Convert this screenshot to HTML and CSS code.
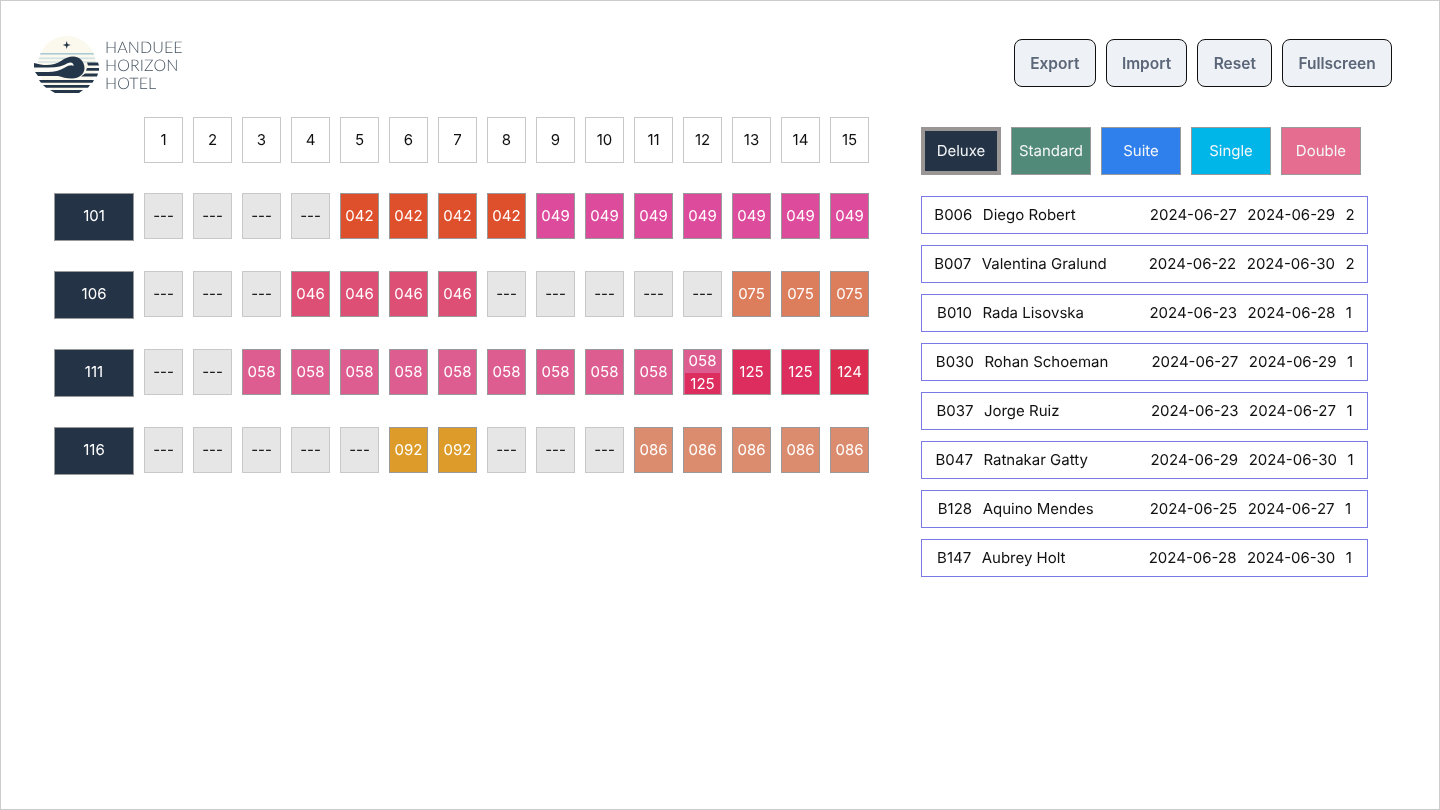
FILE: index.html
```html
<!DOCTYPE html>
<html lang="en">
<head>
  <meta charset="UTF-8">
  <meta name="viewport" content="width=device-width, initial-scale=1.0">
  <title>Handuee Horizon Hotel</title>
  <link rel="stylesheet" href="styles.css">
</head>
<body>
  <div class="page">
    <header class="topbar">
      <div class="logo">
        <svg class="logo-mark" viewBox="0 0 66 58" width="66" height="58" aria-hidden="true">
          <defs>
            <clipPath id="disc"><circle cx="33" cy="29" r="29"/></clipPath>
          </defs>
          <g clip-path="url(#disc)">
            <rect width="66" height="58" fill="#fbf9ee"/>
            <rect y="17" width="66" height="1.6" fill="#a9cbd8"/>
            <rect y="21.5" width="66" height="1.6" fill="#cfe2e6"/>
            <rect y="25" width="66" height="2" fill="#dfe9e8"/>
          </g>
          <path d="M32.700 5l.9 3.100 3.100.9-3.100.9-.9 3.100-.9-3.100-3.100-.9 3.100-.9z" fill="#24364a"/>
          <path d="M0 27C10 30 20 30 27 25 31 22 35 20.500 39 20.500 46 20.500 50.500 26 50.500 32 50.500 38 45 42.500 38 42.500 32 42.500 28 41 24 40H4L1 36H0z" fill="#24364a"/>
          <path d="M0 31.500H15C23 31.500 29 30 34 27 37 25.500 40 27 39.500 30 38 28.500 35 29 31 31.500 26 34.500 20 36 14 36H0z" fill="#fdfcf6"/>
          <path d="M53 26.500h11l1 3H54zM53 32h12v2.800H52zM51 37.500h13l-1 3H47z" fill="#24364a"/>
          <path d="M5 44h55l-1.500 2.800H7zM9 49h47l-2 2.800H12zM16 54h33l-4 3H21z" fill="#24364a"/>
        </svg>
        <div class="logo-name">HANDUEE<br>HORIZON<br>HOTEL</div>
      </div>
      <nav class="actions">
        <button class="btn">Export</button>
        <button class="btn">Import</button>
        <button class="btn">Reset</button>
        <button class="btn">Fullscreen</button>
      </nav>
    </header>

    <main class="content">
      <section class="board">
        <div class="corner"></div>
        <div class="cell day">1</div><div class="cell day">2</div><div class="cell day">3</div><div class="cell day">4</div><div class="cell day">5</div>
        <div class="cell day">6</div><div class="cell day">7</div><div class="cell day">8</div><div class="cell day">9</div><div class="cell day">10</div>
        <div class="cell day">11</div><div class="cell day">12</div><div class="cell day">13</div><div class="cell day">14</div><div class="cell day">15</div>

        <div class="room">101</div>
        <div class="cell free">---</div><div class="cell free">---</div><div class="cell free">---</div><div class="cell free">---</div>
        <div class="cell b042">042</div><div class="cell b042">042</div><div class="cell b042">042</div><div class="cell b042">042</div>
        <div class="cell b049">049</div><div class="cell b049">049</div><div class="cell b049">049</div><div class="cell b049">049</div><div class="cell b049">049</div><div class="cell b049">049</div><div class="cell b049">049</div>

        <div class="room">106</div>
        <div class="cell free">---</div><div class="cell free">---</div><div class="cell free">---</div>
        <div class="cell b046">046</div><div class="cell b046">046</div><div class="cell b046">046</div><div class="cell b046">046</div>
        <div class="cell free">---</div><div class="cell free">---</div><div class="cell free">---</div><div class="cell free">---</div><div class="cell free">---</div>
        <div class="cell b075">075</div><div class="cell b075">075</div><div class="cell b075">075</div>

        <div class="room">111</div>
        <div class="cell free">---</div><div class="cell free">---</div>
        <div class="cell b058">058</div><div class="cell b058">058</div><div class="cell b058">058</div><div class="cell b058">058</div><div class="cell b058">058</div>
        <div class="cell b058">058</div><div class="cell b058">058</div><div class="cell b058">058</div><div class="cell b058">058</div>
        <div class="cell split b058"><span class="half">058</span><span class="half b125">125</span></div>
        <div class="cell b125">125</div><div class="cell b125">125</div><div class="cell b124">124</div>

        <div class="room">116</div>
        <div class="cell free">---</div><div class="cell free">---</div><div class="cell free">---</div><div class="cell free">---</div><div class="cell free">---</div>
        <div class="cell b092">092</div><div class="cell b092">092</div>
        <div class="cell free">---</div><div class="cell free">---</div><div class="cell free">---</div>
        <div class="cell b086">086</div><div class="cell b086">086</div><div class="cell b086">086</div><div class="cell b086">086</div><div class="cell b086">086</div>
      </section>

      <aside class="side">
        <div class="types">
          <div class="type deluxe active">Deluxe</div>
          <div class="type standard">Standard</div>
          <div class="type suite">Suite</div>
          <div class="type single">Single</div>
          <div class="type double">Double</div>
        </div>
        <ul class="bookings">
          <li><span>B006</span><span class="guest">Diego Robert</span><span>2024-06-27</span><span>2024-06-29</span><span>2</span></li>
          <li><span>B007</span><span class="guest">Valentina Gralund</span><span>2024-06-22</span><span>2024-06-30</span><span>2</span></li>
          <li><span>B010</span><span class="guest">Rada Lisovska</span><span>2024-06-23</span><span>2024-06-28</span><span>1</span></li>
          <li><span>B030</span><span class="guest">Rohan Schoeman</span><span>2024-06-27</span><span>2024-06-29</span><span>1</span></li>
          <li><span>B037</span><span class="guest">Jorge Ruiz</span><span>2024-06-23</span><span>2024-06-27</span><span>1</span></li>
          <li><span>B047</span><span class="guest">Ratnakar Gatty</span><span>2024-06-29</span><span>2024-06-30</span><span>1</span></li>
          <li><span>B128</span><span class="guest">Aquino Mendes</span><span>2024-06-25</span><span>2024-06-27</span><span>1</span></li>
          <li><span>B147</span><span class="guest">Aubrey Holt</span><span>2024-06-28</span><span>2024-06-30</span><span>1</span></li>
        </ul>
      </aside>
    </main>
  </div>
</body>
</html>
```

FILE: styles.css
```css
* {
  box-sizing: border-box;
}

body {
  margin: 0;
  font-family: Inter, "Liberation Sans", sans-serif;
  font-size: 15px;
  color: #111;
  background: white;
  text-rendering: geometricPrecision;
}

.page {
  height: 810px;
  border: 1px solid #ccc;
  padding: 35px 47px 0 33px;
  will-change: transform;
}

.topbar {
  display: flex;
  justify-content: space-between;
  align-items: flex-start;
  height: 81px;
}

.logo {
  display: flex;
  align-items: center;
  gap: 5px;
}

.logo-name {
  padding-top: 1px;
  font-family: Lato, sans-serif;
  font-weight: 300;
  font-size: 16px;
  line-height: 18px;
  letter-spacing: 0.1px;
  color: #44525f;
}

.actions {
  display: flex;
  gap: 10px;
  margin-top: 3px;
}

.btn {
  height: 48px;
  padding: 0 15.25px;
  font-family: inherit;
  font-size: 15.5px;
  font-weight: 600;
  color: #5b6678;
  background: #eef1f5;
  border: 1px solid #111;
  border-radius: 8px;
  cursor: pointer;
}

.content {
  display: flex;
  align-items: flex-start;
  padding-left: 20px;
}

.board {
  display: grid;
  grid-template-columns: 80px repeat(15, 39px);
  grid-template-rows: 46px repeat(4, 48px);
  column-gap: 10px;
  row-gap: 30px;
  align-items: start;
}

.cell {
  display: flex;
  align-items: center;
  justify-content: center;
  height: 46px;
  padding-bottom: 2px;
  color: white;
  border: 1px solid #999;
}

.cell.day {
  color: #111;
  background: white;
  border-color: #c8c8c8;
}

.cell.free {
  color: #111;
  background: #e6e6e6;
  border-color: #c8c8c8;
}

.room {
  display: flex;
  align-items: center;
  justify-content: center;
  height: 48px;
  padding-bottom: 4px;
  color: white;
  background: #243346;
  border: 1px solid #999;
}

.cell.split {
  flex-direction: column;
  padding: 0 1px;
}

.half {
  flex: 1;
  align-self: stretch;
  display: flex;
  align-items: center;
  justify-content: center;
  padding-bottom: 2px;
}

.half.b125 {
  padding-bottom: 0;
}

.b042 { background: #de4f2c; }
.b046 { background: #dd4f74; }
.b049 { background: #dd4b9d; }
.b058 { background: #de5d90; }
.b075 { background: #dc7d5c; }
.b086 { background: #dc8c6e; }
.b092 { background: #dd9c2a; }
.b124 { background: #dc2d50; }
.b125 { background: #dc2d5e; }

.side {
  width: 447px;
  margin-left: 52px;
  padding-top: 10px;
}

.types {
  display: flex;
  gap: 10px;
}

.type {
  display: flex;
  align-items: center;
  justify-content: center;
  width: 80px;
  height: 48px;
  padding-bottom: 2px;
  color: #f4f6f8;
  border: 1px solid #999;
}

.type.active {
  border: 4px solid #9a9696;
}

.deluxe { background: #243346; }
.standard { background: #528a7a; }
.suite { background: #2f80ed; }
.single { background: #00b5e8; }
.double { background: #e56e90; }

.bookings {
  list-style: none;
  margin: 21px 0 0;
  padding: 0;
  display: flex;
  flex-direction: column;
  gap: 11px;
}

.bookings li {
  display: flex;
  align-items: center;
  justify-content: center;
  gap: 10.5px;
  height: 38px;
  padding-bottom: 2px;
  border: 1px solid #7a7ae6;
}

.guest {
  width: 156.5px;
}
```
